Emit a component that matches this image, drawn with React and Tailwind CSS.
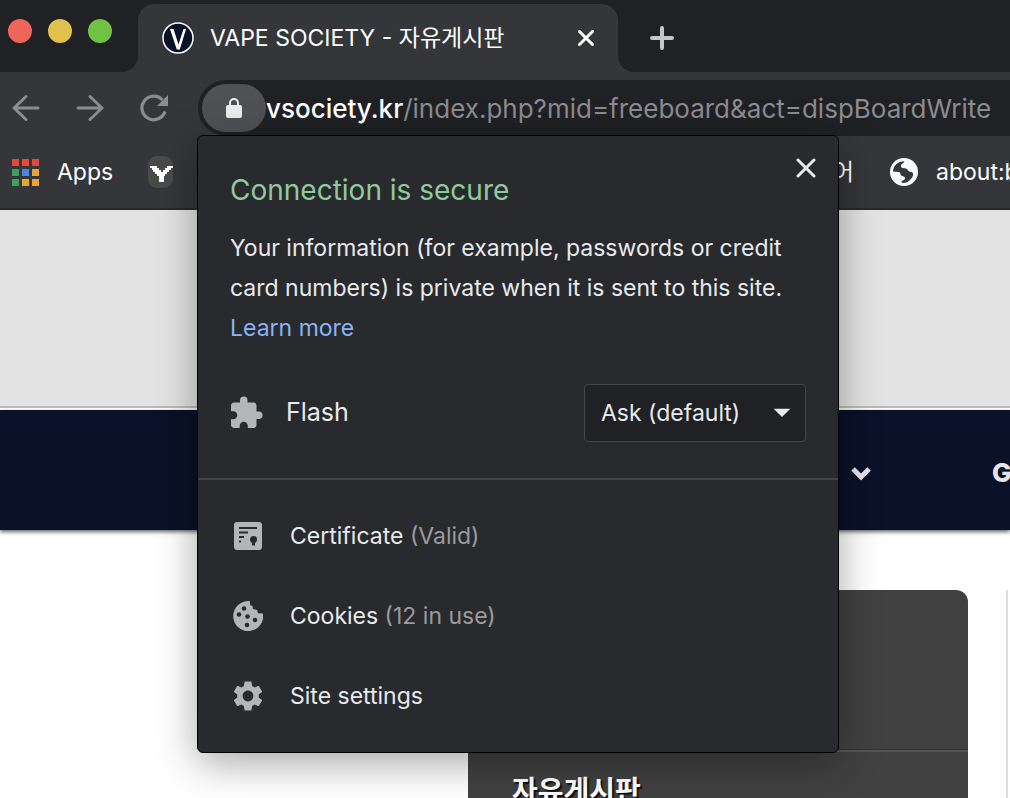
import React, { useState } from 'react';
import { MdArrowDropDown, MdExtension, MdSettings } from 'react-icons/md';

const appColors = [
  'bg-[#e0493b]', 'bg-[#e0493b]', 'bg-[#e0493b]',
  'bg-[#3f9f5f]', 'bg-[#4a86e8]', 'bg-[#e8a43a]',
  'bg-[#3f9f5f]', 'bg-[#e8a43a]', 'bg-[#e8a43a]',
];

const LockIcon = () => (
  <svg className="w-4 h-5" viewBox="0 0 16 20">
    <rect y="7" width="16" height="13" rx="2" fill="#ececec" />
    <path d="M4 8V5a4 4 0 0 1 8 0v3" fill="none" stroke="#ececec" strokeWidth="2" />
  </svg>
);

const CertificateIcon = () => (
  <svg className="w-7 h-7" viewBox="0 0 28 28">
    <rect width="28" height="28" rx="3" fill="#b4b5b8" />
    <path d="M5 6h18M5 10.5h9M5 15h5M5 19.500h2" stroke="#292a2d" strokeWidth="2" />
    <circle cx="19.500" cy="17.500" r="3.500" fill="#292a2d" />
    <path d="M19.500 18v5.500" stroke="#292a2d" strokeWidth="3" />
  </svg>
);

const CookieIcon = () => (
  <svg className="w-[30px] h-[30px]" viewBox="0 0 30 30">
    <path d="M17 .2A15 15 0 1 0 30 12.500l-5-.3-1-3.200-4-1-.500-3-2.500-1z" fill="#b4b5b8" />
    <g fill="#292a2d">
      <circle cx="11" cy="7.500" r="2.300" />
      <circle cx="6" cy="13.500" r="2.300" />
      <circle cx="14.500" cy="15.500" r="2.300" />
      <circle cx="22" cy="19" r="2.300" />
      <circle cx="14" cy="24" r="2.300" />
    </g>
  </svg>
);

const GlobeIcon = () => (
  <svg className="w-7 h-7 shrink-0" viewBox="0 0 28 28">
    <circle cx="14" cy="14" r="14" fill="#f8f9fa" />
    <path
      d="M3 13.500C3.200 8 7.500 3.200 14.500 3.200c-1 2.300-4 2.300-3.500 5.300.3 2.500 5 1 6.500 3 .5 1.500 2 2.500 4 2.500 1.500.5 2 2 1.500 3.500-1.500 4-5 7-9.500 7.500-2 0-2.500-1-1.500-2 2-1 3-1.500 3-3 0-2-4-1.500-4.500-3.500 0-2-1-2.500-2.500-2.500z"
      fill="#35363a"
    />
  </svg>
);

const TabStrip = () => (
  <header className="flex h-[72px] shrink-0 bg-[#202124]">
    <div className="flex w-[138px] shrink-0 bg-[#35363a]">
      <div className="flex flex-1 gap-4 rounded-br-2xl bg-[#202124] pl-2 pt-[19px]">
        <button aria-label="Close window" className="w-6 h-6 rounded-full bg-[#f0655a]" />
        <button aria-label="Minimize" className="w-6 h-6 rounded-full bg-[#e1c04c]" />
        <button aria-label="Zoom" className="w-6 h-6 rounded-full bg-[#71c244]" />
      </div>
    </div>
    <div className="mt-1 flex w-[480px] shrink-0 items-center rounded-t-2xl bg-[#35363a] pl-6 pr-5">
      <svg className="w-8 h-8 shrink-0" viewBox="0 0 32 32">
        <circle cx="16" cy="16" r="15" fill="#0a1128" stroke="#fff" strokeWidth="1.500" />
        <path d="M8 7h3.500l5 15.500L21.500 7H24l-6.200 20.500h-3z" fill="#fff" />
      </svg>
      <span className="ml-4 flex-1 truncate text-[23px] text-white">VAPE SOCIETY - 자유게시판</span>
      <button aria-label="Close tab" className="flex w-6 h-6 items-center justify-center">
        <svg className="w-4 h-4" viewBox="0 0 16 16" stroke="#fff" strokeWidth="3" strokeLinecap="round">
          <path d="M1.500 1.500l13 13M14.500 1.500l-13 13" />
        </svg>
      </button>
    </div>
    <div className="flex flex-1 bg-[#35363a]">
      <div className="flex-1 rounded-bl-2xl bg-[#202124] pl-8 pt-[26px]">
        <button aria-label="New tab" className="block">
          <svg className="w-6 h-6" viewBox="0 0 24 24" stroke="#c5c6c9" strokeWidth="4" strokeLinecap="round">
            <path d="M12 2v20M2 12h20" />
          </svg>
        </button>
      </div>
    </div>
  </header>
);

const Toolbar = () => (
  <div className="flex h-16 shrink-0 items-end bg-[#35363a]">
    <div className="flex h-14 w-[198px] shrink-0 items-center gap-9 pl-3">
      <button aria-label="Back">
        <svg className="w-7 h-7" viewBox="0 0 28 28" fill="none" stroke="#8b8c8f" strokeWidth="3" strokeLinecap="round" strokeLinejoin="round">
          <path d="M26 14H2M14 2.500 2 14l12 11.500" />
        </svg>
      </button>
      <button aria-label="Forward">
        <svg className="w-7 h-7" viewBox="0 0 28 28" fill="none" stroke="#8b8c8f" strokeWidth="3" strokeLinecap="round" strokeLinejoin="round">
          <path d="M2 14h24M14 2.500 26 14 14 25.500" />
        </svg>
      </button>
      <button aria-label="Reload">
        <svg className="w-7 h-7" viewBox="0 0 28 28">
          <path d="M25 17.500A11.800 11.800 0 1 1 22.500 6" fill="none" stroke="#8b8c8f" strokeWidth="3.200" />
          <path d="M28 1v11H17z" fill="#8b8c8f" />
        </svg>
      </button>
    </div>
    <div className="flex h-14 min-w-0 flex-1 items-center overflow-hidden rounded-l-full bg-[#202124] pl-1">
      <button aria-label="View site information" className="flex h-12 w-16 shrink-0 items-center justify-center rounded-full bg-[#505155]">
        <LockIcon />
      </button>
      <span className="whitespace-nowrap text-[26px] text-[#8b8c8f]">
        <span className="font-medium text-white">vsociety.kr</span>/index.php?mid=freeboard&amp;act=dispBoardWrite
      </span>
    </div>
  </div>
);

const BookmarksBar = () => (
  <div className="flex h-[74px] shrink-0 items-center border-b-2 border-[#29292c] bg-[#35363a] pl-3 text-[23px] text-white">
    <a href="#apps" className="flex items-center gap-[18px]">
      <span className="grid grid-cols-3 gap-[3px]">
        {appColors.map((color, i) => (
          <span key={i} className={`w-[7px] h-[7px] ${color}`} />
        ))}
      </span>
      Apps
    </a>
    <a href="#y" aria-label="Y" className="ml-8 shrink-0">
      <svg className="w-8 h-8" viewBox="0 0 32 32">
        <rect x="3" y="0" width="25" height="32" rx="9" fill="#4a4a4b" />
        <path d="M5 10h7v2h2v2h2v2h2v-2h2v-2h2v-2h6v2h-2v2h-2v2h-2v2h-2v2h-1v6h-5v-6h-2v-2h-2v-2H8v-2H7v-2H5z" fill="#fff" />
      </svg>
    </a>
    <div className="flex flex-1 items-center justify-end gap-9 overflow-hidden">
      <a href="#book">어</a>
      <a href="#blank" className="flex w-[120px] shrink-0 items-center gap-[18px]">
        <GlobeIcon />
        about:blank
      </a>
    </div>
  </div>
);

const SitePage = () => (
  <main className="flex min-h-0 flex-1 flex-col overflow-hidden bg-white">
    <div className="h-[198px] shrink-0 border-b-2 border-[#bcbcbc] bg-[#e3e3e3]" />
    <nav className="z-0 mt-0.5 flex h-[120px] shrink-0 items-center justify-end bg-[#0a1128] pt-1 text-[26px] font-extrabold text-[#e3e4e8] shadow-[0_2px_4px_rgba(0,0,0,0.6)]">
      <a href="#menu" aria-label="Menu" className="mr-[121px] mt-1">
        <svg className="w-5 h-[14px]" viewBox="0 0 20 14" fill="none" stroke="#e3e4e8" strokeWidth="5">
          <path d="M2 2l8 8 8-8" />
        </svg>
      </a>
      <a href="#g" className="w-[18px] overflow-hidden">G</a>
    </nav>
    <div className="mt-[60px] flex min-h-0 flex-1 justify-end">
      <section className="w-[500px] rounded-tr-xl bg-[#414141]">
        <div className="h-[162px] border-b-2 border-[#555] shadow-[inset_0_-1px_0_#333]" />
        <h1 className="pl-11 pt-[18px] text-[28px] font-bold text-white [text-shadow:2px_2px_1px_#111]">자유게시판</h1>
      </section>
      <aside className="ml-[38px] w-1 border-l-2 border-[#ddd]" />
    </div>
  </main>
);

const InfoRow = ({ icon, label, detail }) => (
  <button className="flex h-20 w-full items-center pl-8 text-left text-[23px]">
    <span className="flex w-9 shrink-0 justify-center text-[#b4b5b8]">{icon}</span>
    <span className="ml-6">
      {label} {detail && <span className="text-[#9a9b9e]">{detail}</span>}
    </span>
  </button>
);

const SiteInfo = ({ onClose }) => {
  const [flash, setFlash] = useState('ask');

  return (
    <div
      role="dialog"
      aria-labelledby="site-info-title"
      className="absolute left-[197px] top-[135px] z-10 w-[642px] rounded-md border border-black bg-[#292a2d] text-[#e8eaed] shadow-[0_10px_40px_rgba(0,0,0,0.35)]"
    >
      <div className="px-8 pt-8">
        <div className="flex items-start justify-between">
          <h2 id="site-info-title" className="text-[28px] leading-[44px] text-[#8fca9c]">Connection is secure</h2>
          <button aria-label="Close" onClick={onClose} className="-mr-3 -mt-3 flex h-6 w-6 items-center justify-center">
            <svg className="w-5 h-5" viewBox="0 0 20 20" stroke="#e8eaed" strokeWidth="3" strokeLinecap="round">
              <path d="M2 2l16 16M18 2 2 18" />
            </svg>
          </button>
        </div>
        <p className="mt-4 text-[23px] leading-10">
          Your information (for example, passwords or credit card numbers) is private when it is sent to this site.
          <a href="#learn" className="block text-[#8ab4f8]">Learn more</a>
        </p>
        <div className="mt-9 flex items-center">
          <MdExtension className="-ml-0.5 w-9 h-9 text-[#b4b5b8]" />
          <label htmlFor="flash" className="ml-[22px] flex-1 text-[25px]">Flash</label>
          <div className="relative">
            <select
              id="flash"
              value={flash}
              onChange={(e) => setFlash(e.target.value)}
              className="h-[58px] w-[222px] appearance-none rounded border border-[#45464a] bg-[#202124] pl-4 text-[23px]"
            >
              <option value="ask">Ask (default)</option>
              <option value="block">Block</option>
            </select>
            <MdArrowDropDown className="pointer-events-none absolute right-1 top-2 w-10 h-10" />
          </div>
        </div>
      </div>
      <div className="mt-9 border-t-2 border-[#434447] py-4">
        <InfoRow icon={<CertificateIcon />} label="Certificate" detail="(Valid)" />
        <InfoRow icon={<CookieIcon />} label="Cookies" detail="(12 in use)" />
        <InfoRow icon={<MdSettings className="w-9 h-9" />} label="Site settings" />
      </div>
    </div>
  );
};

const App = () => {
  const [showInfo, setShowInfo] = useState(true);

  return (
    <div className="relative flex h-screen flex-col overflow-hidden font-['Inter','Noto_Sans_CJK_KR',sans-serif]">
      <TabStrip />
      <Toolbar />
      <BookmarksBar />
      <SitePage />
      {showInfo && <SiteInfo onClose={() => setShowInfo(false)} />}
    </div>
  );
};

export default App;
